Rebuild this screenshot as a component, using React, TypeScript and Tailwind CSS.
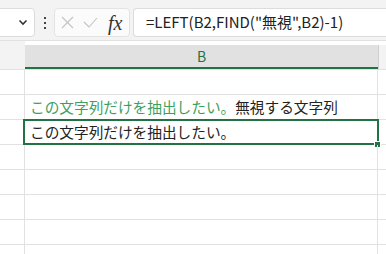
import type { ReactNode } from "react";

const jp = "font-['Noto_Sans_CJK_JP',sans-serif]";

function Row({ children, last }: { children?: ReactNode; last?: boolean }) {
  return (
    <div className={`grid h-[25px] grid-cols-[25px_353px_1fr] ${last ? "" : "border-b border-[#e1e1e1]"}`}>
      <div className="border-r border-[#e1e1e1]" />
      <div className="relative flex items-center border-r border-[#e1e1e1] pl-[5px]">{children}</div>
      <div />
    </div>
  );
}

export default function App() {
  return (
    <div className={`h-[254px] w-[386px] overflow-hidden bg-white ${jp}`}>
      {/* formula bar */}
      <div className="flex h-[41px] items-start border-b border-[#e1e1e1] bg-[#f3f3f3] pt-[8px]">
        <div className="-ml-[6px] flex h-[29px] w-[41px] items-center justify-end rounded-[4px] border border-[#dcdcdc] bg-white pr-[6px]">
          <svg width="10" height="7" viewBox="0 0 10 7" fill="none">
            <path d="M1.5 1.5 5 5l3.5-3.5" stroke="#333" strokeWidth="1.6" />
          </svg>
        </div>
        <div className="ml-[9px] flex h-[29px] flex-col justify-center gap-[3px]">
          <span className="block h-[2px] w-[2px] bg-[#444]" />
          <span className="block h-[2px] w-[2px] bg-[#444]" />
          <span className="block h-[2px] w-[2px] bg-[#444]" />
        </div>
        <div className="ml-[8px] flex h-[29px] w-[76px] items-center rounded-[4px] border border-[#e3e3e3] bg-[#fbfbfb] pl-[6px]">
          <svg width="13" height="13" viewBox="0 0 13 13" fill="none">
            <path d="M1 1l11 11M12 1 1 12" stroke="#c4c4c4" strokeWidth="1.1" />
          </svg>
          <svg className="ml-[9px]" width="15" height="11" viewBox="0 0 15 11" fill="none">
            <path d="M1 5l5 5L14 1" stroke="#c4c4c4" strokeWidth="1.1" />
          </svg>
          <span className="ml-[10px] font-['Liberation_Serif',serif] text-[20px] italic leading-none text-[#333]">fx</span>
        </div>
        <div className="ml-[3px] flex h-[29px] flex-1 items-center rounded-l-[4px] border border-r-0 border-[#dcdcdc] bg-white pl-[12px] text-[15px] text-[#222]">
          =LEFT(B2,FIND("無視",B2)-1)
        </div>
      </div>

      {/* column header */}
      <div className="grid h-[29px] grid-cols-[25px_353px_1fr] border-b border-[#e1e1e1]">
        <div className="bg-[#f3f3f3]" />
        <div className="mt-[4px] flex items-center justify-center border-b-2 border-[#217346] bg-[#e1e1e1] text-[14px] text-[#217346]">
          B
        </div>
        <div className="mt-[4px] border-l border-[#cfcfcf] bg-[#f3f3f3]" />
      </div>

      {/* rows */}
      <Row />
      <Row>
        <span className="whitespace-nowrap text-[14.67px] leading-none">
          <span className="text-[#3c9f5f]">この文字列だけを抽出したい。</span>
          <span className="text-[#222]">無視する文字列</span>
        </span>
      </Row>
      <Row>
        <div className="absolute -top-[1px] -left-[2px] -right-[2px] -bottom-[1px] border-2 border-[#217346]" />
        <div className="absolute -right-[4px] -bottom-[4px] h-[7px] w-[7px] border border-white bg-[#217346]" />
        <span className="relative whitespace-nowrap text-[14.67px] leading-none text-[#222]">この文字列だけを抽出したい。</span>
      </Row>
      <Row />
      <Row />
      <Row />
      <Row />
      <Row last />
    </div>
  );
}
